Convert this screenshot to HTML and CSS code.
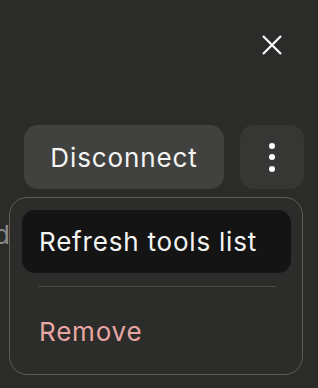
FILE: index.html
```html
<!DOCTYPE html>
<html>
<head>
<meta charset="utf-8">
<link rel="stylesheet" href="styles.css">
</head>
<body>
<div class="panel">
  <div class="topbar">
    <button class="close" aria-label="Close">
      <svg width="20" height="20" viewBox="0 0 20 20"><path d="M1 1L19 19M19 1L1 19" stroke="#fff" stroke-width="2.2" stroke-linecap="butt"/></svg>
    </button>
  </div>
  <div class="actions">
    <button class="btn-disconnect">Disconnect</button>
    <button class="btn-more" aria-label="More">
      <span class="dot"></span><span class="dot"></span><span class="dot"></span>
    </button>
  </div>
  <div class="under-text">d</div>
  <div class="menu">
    <div class="menu-item active">Refresh tools list</div>
    <div class="menu-sep"></div>
    <div class="menu-item danger">Remove</div>
  </div>
</div>
</body>
</html>
```
FILE: styles.css
```css
html, body {
  margin: 0;
  padding: 0;
  background: #2b2b29;
  width: 318px;
  height: 388px;
  overflow: hidden;
  font-family: Inter, "Noto Sans", sans-serif;
}
.panel {
  position: relative;
  width: 318px;
  height: 388px;
}
.topbar {
  display: flex;
  justify-content: flex-end;
  padding: 35px 36px 0 0;
  height: 20px;
}
.close {
  width: 20px;
  height: 20px;
  padding: 0;
  border: 0;
  background: none;
  display: block;
}
.close svg { display: block; }
.actions {
  display: flex;
  justify-content: flex-end;
  gap: 16px;
  padding: 70px 14px 0 0;
}
.btn-disconnect {
  width: 200px;
  height: 64px;
  border: 0;
  border-radius: 14px;
  background: #414140;
  color: #f4f4f2;
  font-family: Inter, "Noto Sans", sans-serif;
  font-size: 26px;
  font-weight: 400;
  padding: 0;
  letter-spacing: 0.9px;
}
.btn-more {
  width: 64px;
  height: 64px;
  border: 0;
  border-radius: 14px;
  background: #363634;
  padding: 0;
  display: flex;
  flex-direction: column;
  align-items: center;
  justify-content: center;
  gap: 5.5px;
}
.dot {
  width: 6px;
  height: 6px;
  border-radius: 50%;
  background: #fff;
}
.under-text {
  position: absolute;
  left: -6px;
  top: 219px;
  font-size: 26px;
  color: #8a8a88;
}
.menu {
  position: absolute;
  left: 9px;
  top: 197px;
  border: 1px solid #5d5d5a;
  border-radius: 18px;
  background: #2c2c2a;
  padding: 12px 11px 0 12px;
  box-sizing: border-box;
  height: 178px;
  width: 294px;
}
.menu-item {
  height: 63px;
  border-radius: 13px;
  display: flex;
  align-items: center;
  padding-left: 17px;
  font-size: 26px;
  letter-spacing: 0.8px;
  color: #f4f4f2;
}
.menu-item.active {
  background: #141414;
}
.menu-sep {
  height: 1px;
  background: #4c4c4a;
  margin: 13px 15px 12px 16px;
}
.menu-item.danger {
  color: #e8a6a4;
  height: 64px;
}
```
